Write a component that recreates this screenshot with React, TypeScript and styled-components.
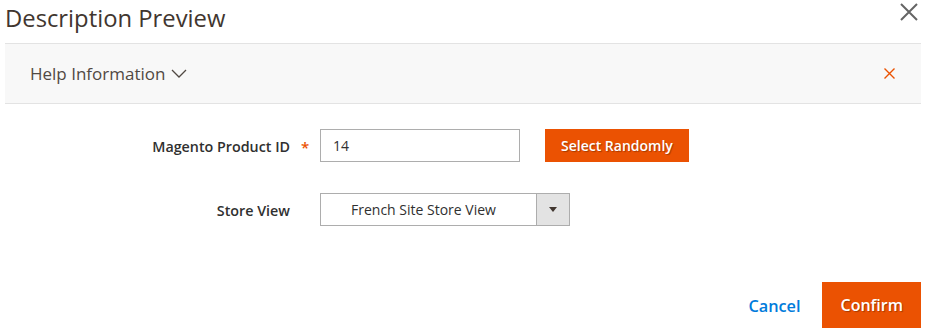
import React from "react";
import styled, { createGlobalStyle } from "styled-components";

const Global = createGlobalStyle`
  html, body {
    margin: 0;
    padding: 0;
    background: #fff;
  }
  body {
    font-family: "Open Sans", "Noto Sans", sans-serif;
    color: #41362f;
  }
  * { box-sizing: border-box; }
`;

const Modal = styled.div`
  width: 929px;
  height: 332px;
  padding: 0 8px 0 5px;
  overflow: hidden;
`;

const Header = styled.header`
  display: flex;
  align-items: flex-start;
  justify-content: space-between;
  height: 43px;
`;

const Title = styled.h1`
  margin: 0;
  padding-top: 2px;
  font-size: 23.8px;
  font-weight: 400;
  line-height: 32px;
  color: #41362f;
`;

const CloseButton = styled.button`
  border: 0;
  background: none;
  padding: 0;
  margin: 3px 3px 0 0;
  width: 18px;
  height: 18px;
  display: flex;
  cursor: pointer;
`;

const Help = styled.div`
  display: flex;
  align-items: center;
  justify-content: space-between;
  height: 61px;
  padding: 0 26px 0 25px;
  background: #f8f8f8;
  border-top: 1px solid #e3e3e3;
  border-bottom: 1px solid #e3e3e3;
`;

const HelpToggle = styled.div`
  display: flex;
  align-items: center;
  gap: 6px;
  font-size: 17px;
  color: #514943;
`;

const HelpClose = styled.span`
  display: flex;
  width: 11px;
  height: 11px;
`;

const Form = styled.div`
  display: grid;
  grid-template-columns: 285px 30px max-content;
  align-items: center;
  row-gap: 31px;
  margin-top: 25px;
`;

const Label = styled.label`
  text-align: right;
  font-size: 14.3px;
  font-weight: 600;
  color: #303030;
  padding-top: 1px;
`;

const Required = styled.span`
  text-align: center;
  color: #eb5202;
  font-size: 15px;
  font-weight: 600;
  padding-top: 2px;
`;

const Control = styled.div`
  display: flex;
  align-items: center;
  gap: 25px;
`;

const Input = styled.input`
  width: 200px;
  height: 33px;
  border: 1px solid #adadad;
  padding: 0 12px;
  font-family: inherit;
  font-size: 14px;
  color: #303030;
  outline: none;
`;

const OrangeButton = styled.button<{ $large?: boolean }>`
  height: ${p => (p.$large ? "46px" : "33px")};
  padding: ${p => (p.$large ? "0 18px 0 19px" : "0 16px")};
  border: 0;
  background: #eb5202;
  color: #fff;
  font-family: inherit;
  font-size: ${p => (p.$large ? "16px" : "14px")};
  font-weight: 600;
  text-shadow: 1px 1px 1px rgba(0, 0, 0, 0.3);
  cursor: pointer;
`;

const Select = styled.div`
  display: flex;
  width: 250px;
  height: 33px;
  border: 1px solid #adadad;
  font-size: 14px;
  color: #303030;
`;

const SelectValue = styled.span`
  flex: 1;
  display: flex;
  align-items: center;
  padding-left: 30px;
`;

const SelectArrow = styled.span`
  width: 33px;
  display: flex;
  align-items: center;
  justify-content: center;
  background: #e3e3e3;
  border-left: 1px solid #adadad;
  &::after {
    content: "";
    border-left: 4px solid transparent;
    border-right: 4px solid transparent;
    border-top: 5px solid #41362f;
  }
`;

const Footer = styled.footer`
  display: flex;
  justify-content: flex-end;
  align-items: center;
  gap: 21px;
  margin-top: 56px;
`;

const LinkButton = styled.button`
  border: 0;
  background: none;
  padding: 0;
  margin-top: 2px;
  font-family: inherit;
  font-size: 16.3px;
  font-weight: 600;
  color: #007bdb;
  cursor: pointer;
`;

const App: React.FC = () => {
  return (
    <Modal>
      <Global />
      <Header>
        <Title>Description Preview</Title>
        <CloseButton aria-label="Close">
          <svg width="18" height="18" viewBox="0 0 18 18">
            <path d="M1 1 L17 17 M17 1 L1 17" stroke="#656565" strokeWidth="2" />
          </svg>
        </CloseButton>
      </Header>
      <Help>
        <HelpToggle>
          Help Information
          <svg width="16" height="9" viewBox="0 0 16 9">
            <path d="M1 1 L8 8 L15 1" fill="none" stroke="#514943" strokeWidth="1.3" />
          </svg>
        </HelpToggle>
        <HelpClose>
          <svg width="11" height="11" viewBox="0 0 11 11">
            <path d="M0.5 0.5 L10.5 10.5 M10.5 0.5 L0.5 10.5" stroke="#eb5202" strokeWidth="1.4" />
          </svg>
        </HelpClose>
      </Help>
      <Form>
        <Label>Magento Product ID</Label>
        <Required>*</Required>
        <Control>
          <Input defaultValue="14" />
          <OrangeButton>Select Randomly</OrangeButton>
        </Control>

        <Label>Store View</Label>
        <span />
        <Control>
          <Select>
            <SelectValue>French Site Store View</SelectValue>
            <SelectArrow />
          </Select>
        </Control>
      </Form>
      <Footer>
        <LinkButton>Cancel</LinkButton>
        <OrangeButton $large>Confirm</OrangeButton>
      </Footer>
    </Modal>
  );
};

export default App;
